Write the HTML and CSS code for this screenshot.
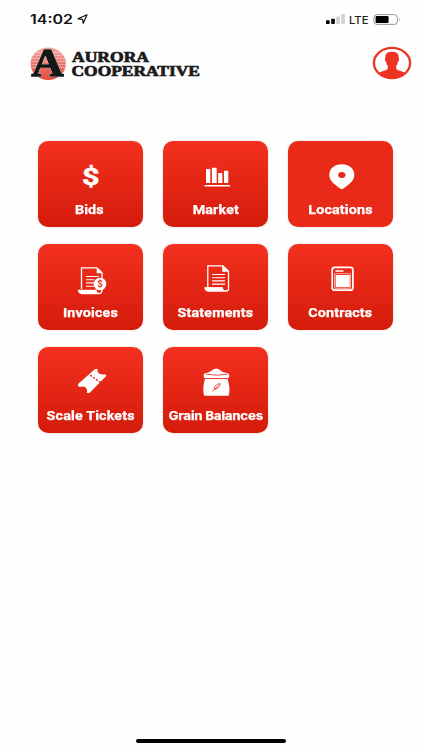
FILE: index.html
```html
<!DOCTYPE html>
<html lang="en">
<head>
<meta charset="utf-8">
<title>Aurora Cooperative</title>
<link rel="stylesheet" href="styles.css">
</head>
<body>
<div class="screen">
  <div class="status">
    <svg class="clock" width="60" height="16" viewBox="0 0 60 16">
      <text x="0" y="12.2" textLength="43" lengthAdjust="spacingAndGlyphs">14:02</text>
      <path d="M48 6.8 57 2.8 53.3 11.3 52.5 7.3Z" fill="none" stroke="#111" stroke-width="1.2" stroke-linejoin="round"/>
    </svg>
    <svg class="signal" width="76" height="16" viewBox="0 0 76 16">
      <rect x="0" y="8.3" width="3.7" height="3.7" rx=".8"/>
      <rect x="5.2" y="6.8" width="3.7" height="5.2" rx=".8"/>
      <rect x="10.2" y="4.5" width="3.7" height="7.5" rx=".8" fill="#d2d2d2"/>
      <rect x="15.2" y="2" width="3.7" height="10" rx=".8" fill="#d2d2d2"/>
      <text x="23" y="11.7" textLength="19.5" lengthAdjust="spacingAndGlyphs">LTE</text>
      <rect x="48" y="2.6" width="23.4" height="9.8" rx="3" fill="none" stroke="#969696"/>
      <rect x="49.6" y="4.1" width="13" height="6.8" rx="1.2"/>
      <path d="M73 5.7q1.8 1.7 0 3.6z" fill="#999"/>
    </svg>
  </div>

  <header class="header">
    <svg class="logo" width="172" height="36" viewBox="0 0 172 36">
      <defs>
        <linearGradient id="sun" x1="0" y1="0" x2="0" y2="1">
          <stop offset="0" stop-color="#f4aaa2"/><stop offset=".5" stop-color="#ed776d"/><stop offset="1" stop-color="#e8483d"/>
        </linearGradient>
      </defs>
      <ellipse cx="18.2" cy="16.7" rx="17.7" ry="16.2" fill="url(#sun)"/>
      <path d="M6 5.5H30M3 8.5H33M2 11.5H35M1 14.5H36M1 17.5H36M1 20.5H36" stroke="#fff" stroke-width=".7" opacity=".5"/>
      <text class="monogram" x="1.5" y="28.900" textLength="32" lengthAdjust="spacingAndGlyphs">A</text>
      <text class="wordmark" x="42" y="14.9" textLength="77" lengthAdjust="spacingAndGlyphs">AURORA</text>
      <text class="wordmark" x="41.5" y="28.7" textLength="128.5" lengthAdjust="spacingAndGlyphs">COOPERATIVE</text>
    </svg>
    <svg class="avatar" width="40" height="34" viewBox="0 0 40 34">
      <defs><clipPath id="face"><ellipse cx="20" cy="17" rx="18" ry="15"/></clipPath></defs>
      <ellipse cx="20" cy="17" rx="18.1" ry="15.1" fill="#fff" stroke="#ed3322" stroke-width="2.3"/>
      <path clip-path="url(#face)" fill="#ed3322" d="M20 5.8c-4.8 0-7 2-6.6 6.1-.9.3-.5 3.4.7 4 .4 2 1 3 1.700 4v2.600c-.8 2.400-7.500 2.500-10.300 5.500V34h29v-6c-2.800-3-9.500-3.100-10.300-5.500v-2.600c.7-1 1.300-2 1.700-4 1.200-.6 1.600-3.700.7-4 .4-4.100-1.800-6.100-6.600-6.100z"/>
    </svg>
  </header>

  <main class="grid">
    <div class="tile">
      <svg class="icon" viewBox="0 0 40 40"><text class="dollar" x="11" y="28.200" textLength="17.500" lengthAdjust="spacingAndGlyphs">$</text></svg>
      <span class="label bids">Bids</span>
    </div>
    <div class="tile">
      <svg class="icon" viewBox="0 0 40 40"><path d="M10 12h4.300v14H10zM15.900 10.800h4.800V26h-4.800zM22.200 16h4.200v10h-4.200zM28 13.700h4.300V26H28zM8.500 28H34v1.500H8.500z"/></svg>
      <span class="label market">Market</span>
    </div>
    <div class="tile flat">
      <svg class="icon" viewBox="0 0 40 40"><path fill-rule="evenodd" d="M20.800 7.200c7.500 0 12.500 4.500 12.500 10.800 0 6.500-6.500 10.200-11.300 13.800q-1.200.8-2.400 0C14.800 28.200 8.300 24.500 8.300 18 8.300 11.700 13.300 7.200 20.800 7.200zm0 7.700c-2.200 0-3.700 1.200-3.700 3s1.500 3 3.700 3 3.700-1.200 3.700-3-1.500-3-3.700-3z"/></svg>
      <span class="label locations">Locations</span>
    </div>
    <div class="tile">
      <svg class="icon" viewBox="0 0 40 40">
        <path class="line" d="M10.500 29V7.800H26l5 5V30q0 3.500-3 3.500H11q-3.200 0-3.500-3.200H25q.2 3.200 3 3.200"/>
        <path d="M25.700 7.500v5.700h6zM7.500 30.300H25q0 2.300 2 3.200H11q-3.200 0-3.500-3.200z"/>
        <path class="line thin" d="M15 16.500h13M15 19.700h8M15 22.900h8M15 26.300h9"/>
        <circle cx="29" cy="24" r="6.300"/>
        <text class="coin" x="26.400" y="27.300">$</text>
      </svg>
      <span class="label invoices">Invoices</span>
    </div>
    <div class="tile">
      <svg class="icon" viewBox="0 0 40 40">
        <path class="line" d="M11.800 27.500V5.800h15.200l5.500 5.500v17.500q0 2.200-2.600 2.200H13q-3.400 0-4-3.200h17.300q.2 3.200 3.400 3.200"/>
        <path d="M26.200 5.500v6.300H33zM9 27.500h17.300q0 2.500 2 3.500H12.500q-3 0-3.500-3.500z"/>
        <path class="line thin" d="M16 14.500h13M16 17.700h13M16 20.900h13M16 24.100h13"/>
      </svg>
      <span class="label statements">Statements</span>
    </div>
    <div class="tile">
      <svg class="icon" viewBox="0 0 40 40">
        <rect class="line wide" x="11.200" y="7.400" width="20.700" height="22.800" rx="2.500"/>
        <path d="M14.600 15.100h14.200v12.200H14.600zM14.500 10.200h8v1.600h-8z"/>
        <path class="frame" d="M13.500 13.700h16v14.700h-16z"/>
      </svg>
      <span class="label contracts">Contracts</span>
    </div>
    <div class="tile">
      <svg class="icon" viewBox="0 0 40 40">
        <path d="M7 21 23.500 6.500q1.500-1.500 3-.3-.4 2.800 1.500 4.300 2.500 1.300 6.200.7 1.800.8.500 2.200L19 29.500q-1.800 1.500-3.200 0 1.200-2.700-.9-4.800-2.200-1.800-6.500-.7-2-.8-1.400-3z"/>
        <path class="perforation" d="M19.300 12.200 29.500 19.500"/>
      </svg>
      <span class="label scale">Scale Tickets</span>
    </div>
    <div class="tile">
      <svg class="icon" viewBox="0 0 40 40">
        <path d="M10.500 10C13 9.300 14.500 8.700 16.500 7q4-3 7.500 0 2 2.300 6.500 3z"/>
        <rect x="7.700" y="10" width="25.500" height="5.500" rx="2.600"/>
        <path d="M9 16h22.500q3.200 9 1.200 16.700H8.200Q6 25 9 16z"/>
        <path class="red-line" d="M10 11.200q10.500 2 21.500 0M9.500 15.600h22M16.300 28.500l2.500-2.800M18.800 26.200q-1.700-2.500 1.200-3.800 1.700-1.700 4.300-1.700-.4 2.500-2.200 3.800-1 2.300-3.300 1.700zM19 26l3.200-3.200"/>
      </svg>
      <span class="label grain">Grain Balances</span>
    </div>
  </main>
  <div class="home-bar"></div>
</div>
</body>
</html>
```
FILE: styles.css
```css
* { box-sizing: border-box; }
body { margin: 0; background: #fefefe; font-family: Roboto, sans-serif; }
svg { display: block; flex: none; overflow: visible; }
.screen { width: 422px; height: 750px; display: flex; flex-direction: column; overflow: hidden; }
.status { display: flex; justify-content: space-between; padding: 12px 20px 0 30px; height: 47px; }
.clock text { font: 600 12.5px Inter, sans-serif; fill: #111; }
.signal text { font: 500 11px Inter, sans-serif; fill: #222; }
.header { display: flex; justify-content: space-between; padding: 0 10px 0 30px; height: 94px; }
.avatar { margin-top: -1px; }
.monogram { font: bold 39px "Liberation Serif", serif; fill: #171717; stroke: #171717; stroke-width: 1.4px; filter: drop-shadow(0 0 .7px #fff) drop-shadow(0 0 .5px #fff); }
.wordmark { font: bold 14.5px "Liberation Serif", serif; fill: #1c1a1b; stroke: #1c1a1b; stroke-width: .7px; }
.grid { display: grid; grid-template-columns: repeat(3, 105px); grid-auto-rows: 86px; column-gap: 20px; row-gap: 17px; padding-left: 38px; }
.tile { display: flex; flex-direction: column; align-items: center; padding-top: 16px; border-radius: 10px; background: linear-gradient(#f4301f, #d41b0a); box-shadow: 0 0 2px rgba(160, 80, 70, .3); }
.flat { background: #e92a18; }
.icon { width: 40px; height: 40px; fill: #fff; }
.line { fill: none; stroke: #fff; stroke-width: 1.3; }
.thin { stroke-width: 1.1; }
.wide { stroke-width: 1.7; }
.frame { fill: none; stroke: #fff; stroke-width: .6; }
.dollar { font: bold 23.5px Roboto, sans-serif; stroke: #fff; stroke-width: .5px; }
.coin { font: bold 9px Roboto, sans-serif; fill: #e32615; }
.perforation { stroke: #e52716; stroke-width: 1.5; stroke-dasharray: 2 1.5; }
.red-line { fill: none; stroke: #e32615; stroke-width: .8; }
.label { margin-top: 6px; color: #fff; font-size: 12.2px; font-weight: 700; line-height: 15px; white-space: nowrap; -webkit-text-stroke: .25px #fff; letter-spacing: .15px; transform: scaleX(1.17); }
.bids { margin-right: 3px; }
.grain { font-family: Inter, sans-serif; font-size: 11.8px; letter-spacing: -.2px; transform: scaleX(1.13); }
.home-bar { width: 150px; height: 4px; border-radius: 2px; background: #000; margin: auto 0 7px 136px; }
```
